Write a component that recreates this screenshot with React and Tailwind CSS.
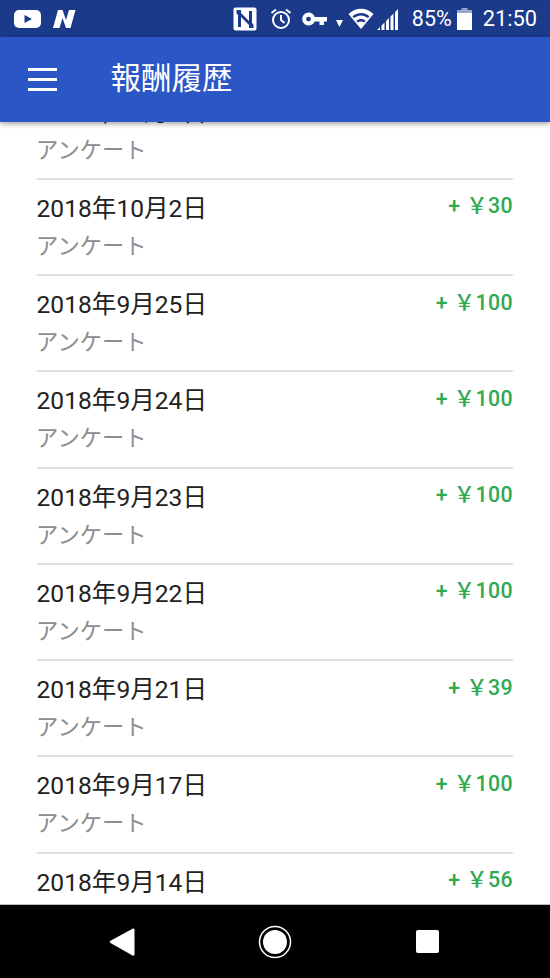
const font = { fontFamily: 'Roboto, "Noto Sans CJK JP", sans-serif' };

const rows = [
  { date: '2018年10月3日', amount: '30' },
  { date: '2018年10月2日', amount: '30' },
  { date: '2018年9月25日', amount: '100' },
  { date: '2018年9月24日', amount: '100' },
  { date: '2018年9月23日', amount: '100' },
  { date: '2018年9月22日', amount: '100' },
  { date: '2018年9月21日', amount: '39' },
  { date: '2018年9月17日', amount: '100' },
  { date: '2018年9月14日', amount: '56' },
];

function StatusBar() {
  return (
    <div className="h-[37px] shrink-0 bg-[#1c3a8a] flex items-center text-white pl-[14px] pr-[13px]">
      {/* youtube */}
      <svg width="28" height="20" viewBox="0 0 28 20">
        <rect x="0" y="1" width="27" height="18" rx="5" fill="#fff" />
        <path d="M10.500 6 L18 10 L10.500 14 Z" fill="#1c3a8a" />
      </svg>
      {/* N app icon */}
      <svg width="25" height="22" viewBox="0 0 25 22" className="ml-[10px]">
        <path d="M1 20 L6 2 H10.500 L14 12 L17 2 H23.500 L18.500 20 H14 L10.500 10 L7.500 20 Z" fill="#fff" />
      </svg>
      <div className="flex-1" />
      {/* nfc */}
      <svg width="24" height="24" viewBox="0 0 24 24">
        <rect x="0.500" y="0.500" width="23" height="23" rx="2" fill="#fff" />
        <path d="M3.500 3 H8 V20 H5 V8 L3.500 6.500 Z M20.500 21 H16 V4 H19 V16 L20.500 17.500 Z M8 6 L16 14 V18 L8 10 Z" fill="#1c3a8a" />
      </svg>
      {/* alarm */}
      <svg width="24" height="24" viewBox="0 0 24 24" className="ml-[12px]" fill="none" stroke="#fff" strokeWidth="2">
        <circle cx="12" cy="13" r="8" />
        <path d="M12 8 V13 L15.500 16" />
        <path d="M2.500 6 L7 2.500 M21.500 6 L17 2.500" />
      </svg>
      {/* vpn key */}
      <svg width="25" height="14" viewBox="0 0 25 14" className="ml-[9px]">
        <path fillRule="evenodd" d="M6.500 0.500 A6.500 6.500 0 0 1 12.700 5 H25 V9.500 H22 V13 H17.500 V9.500 H12.700 A6.500 6.500 0 1 1 6.500 0.500 Z M6.500 4.700 A2.400 2.400 0 1 0 6.500 9.500 A2.400 2.400 0 1 0 6.500 4.700 Z" fill="#fff" />
      </svg>
      {/* data arrow */}
      <svg width="8" height="8" viewBox="0 0 8 8" className="ml-[9px] mt-[9px]">
        <path d="M0 1 H7 L3.500 8 Z" fill="#fff" />
      </svg>
      {/* wifi */}
      <svg width="26" height="22" viewBox="0 0 26 22" className="ml-[4px]">
        <path d="M0.500 6 C8 -1 18 -1 25.500 6 L13 21 Z" fill="#fff" />
        <path d="M4.500 8.300 C10 4 16 4 21.500 8.300 L20 10 C15 6.500 11 6.500 6 10 Z M8.300 12.800 C11.500 10.500 14.500 10.500 17.700 12.800 L16.200 14.600 C14 13 12 13 9.800 14.600 Z" fill="#1c3a8a" />
      </svg>
      {/* signal */}
      <svg width="21" height="22" viewBox="0 0 21 22" className="ml-[3px]" fill="#fff">
        <path d="M0 22 L3 19 V22 Z M4.500 17.500 L7.500 14.500 V22 H4.500 Z M9 13 L12 10 V22 H9 Z M13.500 8.500 L16.500 5.500 V22 H13.500 Z M18 4 L21 1 V22 H18 Z" />
      </svg>
      <span className="ml-[14px] text-[21.5px] leading-none">85%</span>
      {/* battery */}
      <svg width="15" height="22" viewBox="0 0 15 22" className="ml-[5px]">
        <path d="M4.500 0 H10.500 V2 H15 V22 H0 V2 H4.500 Z" fill="#fff" opacity="0.55" />
        <rect x="0" y="5" width="15" height="17" fill="#fff" />
      </svg>
      <span className="ml-[11px] text-[21.8px] leading-none">21:50</span>
    </div>
  );
}

function AppBar() {
  return (
    <div className="h-[85px] shrink-0 bg-[#2a57c5] flex items-center shadow-[0_2px_5px_rgba(0,0,0,0.35)] relative z-10">
      <div className="ml-[28px] w-[29px] flex flex-col gap-[7px]">
        <div className="h-[3px] bg-white" />
        <div className="h-[3px] bg-white" />
        <div className="h-[3px] bg-white" />
      </div>
      <h1 className="ml-[53.500px] text-white text-[30.5px] leading-none font-normal">報酬履歴</h1>
    </div>
  );
}

function Row({ date, amount }) {
  return (
    <div className="h-[96.25px] shrink-0 relative border-b-[2px] border-[#e0e0e4] pt-[13px]">
      <div className="flex items-start justify-between">
        <div className="text-[24.6px] leading-[32px] text-[#212121]">{date}</div>
        <div className="text-[21.3px] leading-[26px] font-medium text-[#2eaa4f] tracking-[0.4px] mt-[0.500px]">+ ￥{amount}</div>
      </div>
      <div className="mt-[6px] -ml-[0.500px] text-[22.3px] leading-[30px] text-[#8a8d91]">アンケート</div>
    </div>
  );
}

function NavBar() {
  return (
    <div className="h-[74px] shrink-0 bg-black border-t border-[#bdbdbd] flex items-center">
      <svg width="26" height="30" viewBox="0 0 26 30" className="ml-[109px]">
        <path d="M24 1.500 C25 1.200 25.500 2 25.500 3 V27 C25.500 28.500 24.500 29 23.500 28.500 L1.500 16 C0.500 15.300 0.500 14.500 1.500 13.800 Z" fill="#fff" />
      </svg>
      <svg width="34" height="34" viewBox="0 0 34 34" className="ml-[123px]">
        <circle cx="17" cy="17" r="15.500" fill="none" stroke="#fff" strokeWidth="1.500" />
        <circle cx="17" cy="17" r="12" fill="#fff" />
      </svg>
      <div className="ml-[124px] w-[23px] h-[23px] bg-white rounded-[2px]" />
    </div>
  );
}

export default function App() {
  return (
    <div className="w-[550px] h-[978px] flex flex-col overflow-hidden bg-white" style={font}>
      <StatusBar />
      <AppBar />
      <div className="flex-1 min-h-0 overflow-hidden">
        <div className="ml-[36.500px] mr-[37px] mt-[-38.500px] flex flex-col">
          {rows.map((row) => (
            <Row key={row.date} date={row.date} amount={row.amount} />
          ))}
        </div>
      </div>
      <NavBar />
    </div>
  );
}
